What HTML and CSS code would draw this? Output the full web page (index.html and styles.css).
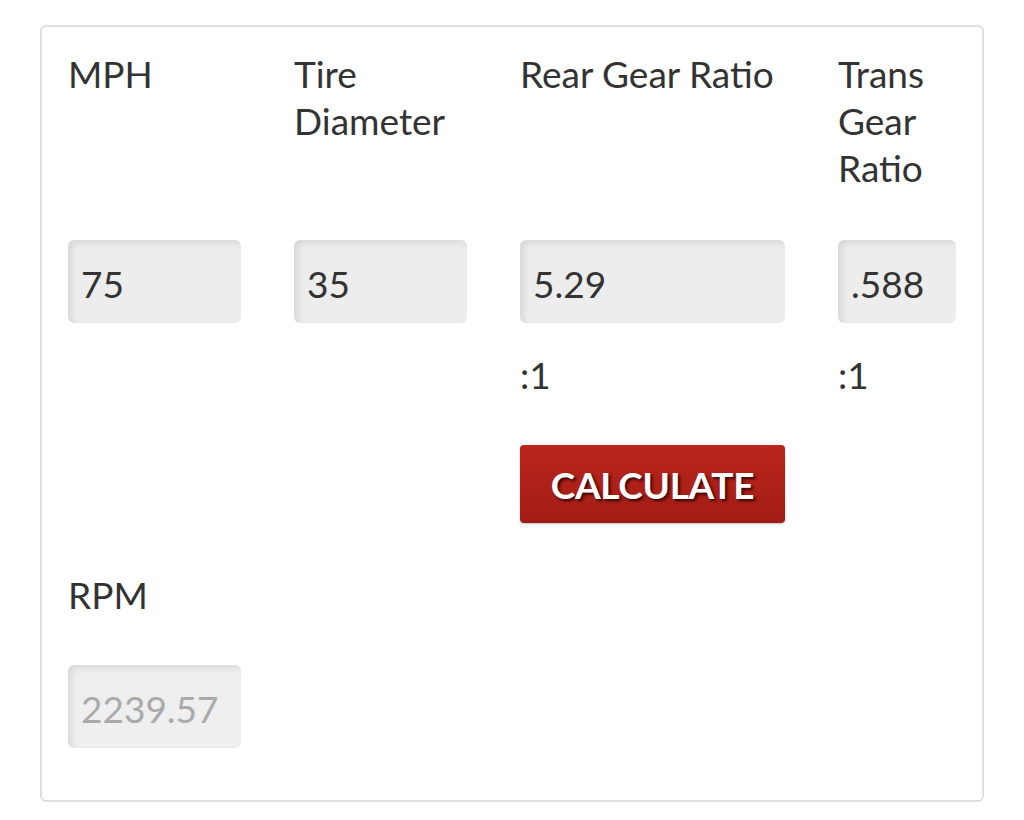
FILE: index.html
```html
<!DOCTYPE html>
<html lang="en">
<head>
<meta charset="utf-8">
<title>RPM Calculator</title>
<link rel="stylesheet" href="styles.css">
</head>
<body>
<form class="calc">
  <label class="lbl c1">MPH</label>
  <label class="lbl c2">Tire Diameter</label>
  <label class="lbl c3">Rear Gear Ratio</label>
  <label class="lbl c4">Trans Gear Ratio</label>

  <div class="field c1 r-input">75</div>
  <div class="field c2 r-input">35</div>
  <div class="field c3 r-input">5.29</div>
  <div class="field c4 r-input">.588</div>

  <div class="suffix c3">:1</div>
  <div class="suffix c4">:1</div>

  <div class="btn-cell c3"><button type="button" class="btn">CALCULATE</button></div>

  <label class="lbl c1 rpm-lbl">RPM</label>
  <div class="field c1 result">2239.57</div>
</form>
</body>
</html>
```

FILE: styles.css
```css
html, body {
  margin: 0;
  padding: 0;
  background: #ffffff;
}

body {
  padding: 25px 40px 18px 40px;
  font-family: Lato, "Open Sans", sans-serif;
  color: #333333;
}

.calc {
  width: 944px;
  box-sizing: border-box;
  border: 2px solid #dedede;
  border-radius: 6px;
  padding: 23px 26px 52px 26px;
  display: grid;
  grid-template-columns: 173px 173px 265px 118px;
  column-gap: 53px;
  align-items: start;
  font-size: 37px;
  line-height: 47px;
}

.c1 { grid-column: 1; }
.c2 { grid-column: 2; }
.c3 { grid-column: 3; }
.c4 { grid-column: 4; }

.lbl {
  grid-row: 1;
  display: block;
  color: #333333;
}

.field {
  grid-row: 2;
  margin-top: 49px;
  height: 83px;
  box-sizing: border-box;
  padding: 3px 0 0 13px;
  display: flex;
  align-items: center;
  background: #ededed;
  border-radius: 6px;
  box-shadow: inset 4px 3px 6px rgba(0, 0, 0, 0.09);
  color: #333333;
  white-space: nowrap;
  overflow: hidden;
}

.suffix {
  grid-row: 3;
  margin-top: 28px;
  color: #333333;
}

.btn-cell {
  grid-row: 4;
  margin-top: 47px;
}

.btn {
  display: block;
  width: 265px;
  height: 78px;
  border: 0;
  border-radius: 4px;
  background: linear-gradient(#ba261c, #a21c15);
  box-shadow: 0 1px 2px rgba(0, 0, 0, 0.25);
  color: #ffffff;
  font-family: Lato, "Open Sans", sans-serif;
  font-weight: 700;
  font-size: 37px;
  letter-spacing: -0.3px;
  text-shadow: 2px 2px 3px rgba(40, 0, 0, 0.9);
  padding: 0;
}

.rpm-lbl {
  grid-row: 5;
  margin-top: 48px;
}

.result {
  grid-row: 6;
  margin-top: 47px;
  color: #aaaaaa;
  background: #efefef;
}
```
